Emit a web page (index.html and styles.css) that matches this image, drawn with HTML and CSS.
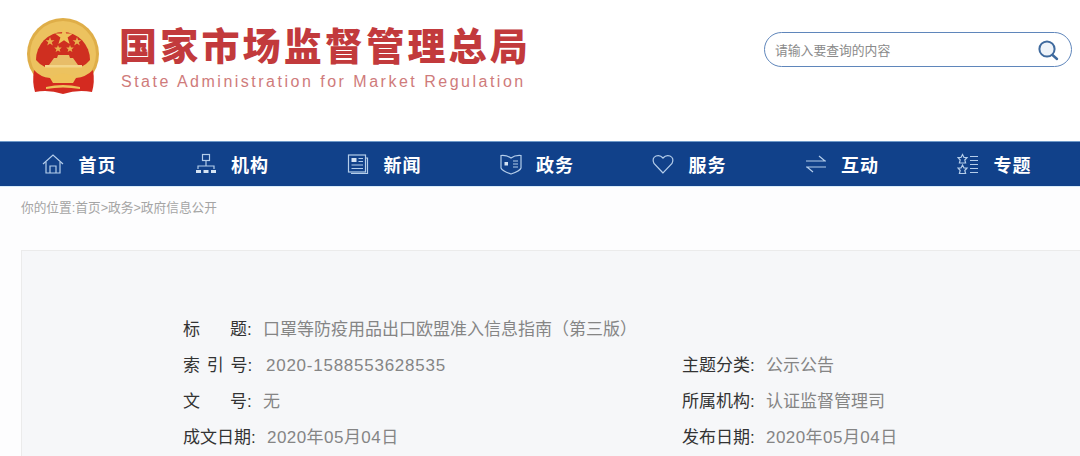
FILE: index.html
```html
<!DOCTYPE html>
<html lang="zh-CN">
<head>
    <meta charset="UTF-8">
    <title>口罩等防疫用品出口欧盟准入信息指南（第三版）</title>
    <link rel="stylesheet" href="styles.css">
</head>
<body>
    <div class="header">
        <div class="logo">
            <svg class="emblem" width="76" height="78" viewBox="0 0 76 78">
                <circle cx="37" cy="36" r="36" fill="#dfae48"/>
                <circle cx="37" cy="36" r="33" fill="#ecc25f"/>
                <path d="M10 42 A27 28 0 1 1 64 42 Q60 47 55 49 L19 49 Q14 47 10 42 Z" fill="#cf2f20"/>
                <polygon points="38,9 40.2,15.5 47,15.5 41.6,19.6 43.6,26 38,22.2 32.4,26 34.4,19.6 29,15.5 35.8,15.5" fill="#f0c35a"/>
                <polygon points="24,19 25.2,22.2 28.4,22.2 25.8,24.2 26.8,27.4 24,25.5 21.2,27.4 22.2,24.2 19.6,22.2 22.8,22.2" fill="#e9b04e"/>
                <polygon points="51,19 52.2,22.2 55.4,22.2 52.8,24.2 53.8,27.4 51,25.5 48.2,27.4 49.2,24.2 46.6,22.2 49.8,22.2" fill="#e9b04e"/>
                <polygon points="32,27 33,29.6 35.8,29.6 33.6,31.4 34.4,34 32,32.4 29.6,34 30.4,31.4 28.2,29.6 31,29.6" fill="#e9b04e"/>
                <polygon points="44,27 45,29.6 47.8,29.6 45.6,31.4 46.4,34 44,32.4 41.6,34 42.4,31.4 40.2,29.6 43,29.6" fill="#e9b04e"/>
                <path d="M32 37 H43 L44 40 H47 L52 47 H23 L28 40 H31 Z" fill="#e8bd68"/>
                <rect x="19" y="47" width="37" height="2.5" fill="#f3d68a"/>
                <path d="M8 52 Q14 59 24 60 Q37 63 50 60 Q60 59 67 52 Q69 64 66 74 Q52 71 37 76 Q22 71 9 74 Q6 64 8 52 Z" fill="#d42a20"/>
                <path d="M24 60 Q37 51 50 60 L47 65 H27 Z" fill="#eec25b"/>
                <path d="M20 69 Q37 65 54 69 L54 71 Q37 68 20 71 Z" fill="#eec25b"/>
            </svg>
            <div class="logo-text">
                <div class="logo-title">国家市场监督管理总局</div>
                <div class="logo-sub">State Administration for Market Regulation</div>
            </div>
        </div>
        <div class="search">
            <span class="search-hint">请输入要查询的内容</span>
            <svg width="24" height="24" viewBox="0 0 24 24">
                <circle cx="11" cy="11" r="7.6" fill="#eef3f9" stroke="#3f6a9e" stroke-width="2"/>
                <path d="M16.5 17 L21 21" stroke="#3f6a9e" stroke-width="2.4" fill="none" stroke-linecap="round"/>
            </svg>
        </div>
    </div>

    <div class="nav">
        <a class="nav-item">
            <svg class="nav-icon" viewBox="0 0 22 22">
                <path d="M1 11 L11 2 L21 11"/>
                <path d="M4 9 V20 H18 V9"/>
                <path d="M8 20 V13 H14 V20"/>
            </svg>
            <span>首页</span>
        </a>
        <a class="nav-item">
            <svg class="nav-icon" viewBox="0 0 22 22">
                <rect x="7.5" y="1.5" width="7" height="6"/>
                <path d="M11 7.5 V13 M3 16 V13 H19 V16"/>
                <path class="fill" d="M1 17 H6 V20 H1 Z M8.5 17 H13.5 V20 H8.5 Z M16 17 H21 V20 H16 Z"/>
            </svg>
            <span>机构</span>
        </a>
        <a class="nav-item">
            <svg class="nav-icon" viewBox="0 0 22 22">
                <rect x="1.5" y="2" width="17" height="17"/>
                <path d="M18.5 5 H20.5 V20.5 H4"/>
                <rect class="fill" x="4.5" y="5" width="5" height="4"/>
                <path d="M11.5 5.5 H16 M11.5 8.5 H16 M4.5 12 H16 M4.5 15.5 H16"/>
            </svg>
            <span>新闻</span>
        </a>
        <a class="nav-item">
            <svg class="nav-icon" viewBox="0 0 22 22">
                <path d="M1 2.5 Q7 2 11 5 Q15 2 21 2.5 V15 Q20 18 11 21 Q2 18 1 15 Z"/>
                <path class="fill" d="M4.5 9 H8 V12.5 H4.5 Z"/>
                <path d="M13 8 H18 M13 11 H18 M13 14 H18"/>
            </svg>
            <span>政务</span>
        </a>
        <a class="nav-item">
            <svg class="nav-icon" viewBox="0 0 22 22">
                <path d="M11 20 L2 10.5 Q-0.5 5 4 3 Q8 1.5 11 5 Q14 1.5 18 3 Q22.5 5 20 10.5 Z"/>
            </svg>
            <span>服务</span>
        </a>
        <a class="nav-item">
            <svg class="nav-icon" viewBox="0 0 22 22">
                <path d="M1 8 H21 M14 3 L20 8"/>
                <path d="M1 14 H21 M2 14 L8 19"/>
            </svg>
            <span>互动</span>
        </a>
        <a class="nav-item">
            <svg class="nav-icon" viewBox="0 0 22 22">
                <path d="M5.5 1.5 L7 4.5 H10 L7.8 7 L8.6 10 H2.4 L3.2 7 L1 4.5 H4 Z"/>
                <path d="M5.5 12 L7 15 H10 L7.8 17.5 L8.6 20.5 H2.4 L3.2 17.5 L1 15 H4 Z"/>
                <path d="M13 3.5 H21 M13 7.5 H21 M13 11.5 H21 M13 15.5 H21 M13 19.5 H21"/>
            </svg>
            <span>专题</span>
        </a>
    </div>

    <div class="crumb">你的位置:首页&gt;政务&gt;政府信息公开</div>

    <div class="card">
        <div class="meta-row">
            <div class="meta-cell wide">
                <span class="meta-label short">标<i class="gap"></i>题:</span>
                <span class="meta-value">口罩等防疫用品出口欧盟准入信息指南（第三版）</span>
            </div>
        </div>
        <div class="meta-row">
            <div class="meta-cell">
                <span class="meta-label mid">索 引 号:</span>
                <span class="meta-value long">2020-1588553628535</span>
            </div>
            <div class="meta-cell">
                <span class="meta-label">主题分类:</span>
                <span class="meta-value">公示公告</span>
            </div>
        </div>
        <div class="meta-row">
            <div class="meta-cell">
                <span class="meta-label short">文<i class="gap"></i>号:</span>
                <span class="meta-value">无</span>
            </div>
            <div class="meta-cell">
                <span class="meta-label">所属机构:</span>
                <span class="meta-value">认证监督管理司</span>
            </div>
        </div>
        <div class="meta-row">
            <div class="meta-cell">
                <span class="meta-label">成文日期:</span>
                <span class="meta-value num">2020年05月04日</span>
            </div>
            <div class="meta-cell">
                <span class="meta-label">发布日期:</span>
                <span class="meta-value num">2020年05月04日</span>
            </div>
        </div>
    </div>
</body>
</html>
```

FILE: styles.css
```css
html, body {
    height: 456px;
    overflow: hidden;
}

body {
    margin: 0;
    font-family: "Liberation Sans", "Noto Sans CJK SC", sans-serif;
    background-color: #fdfdfe;
    color: #333;
}

.header {
    height: 141px;
    background-color: #fff;
    display: flex;
    justify-content: space-between;
    align-items: flex-start;
}

.logo {
    display: flex;
    align-items: flex-start;
    margin: 18px 0 0 26px;
}

.emblem {
    flex-shrink: 0;
}

.logo-text {
    margin: 4px 0 0 17px;
}

.logo-title {
    font-family: "Noto Sans CJK SC", sans-serif;
    font-size: 38px;
    line-height: 44px;
    font-weight: 900;
    letter-spacing: 3.2px;
    color: #c23a3c;
    white-space: nowrap;
}

.logo-sub {
    font-size: 16px;
    line-height: 18px;
    margin-top: 7px;
    margin-left: 2px;
    letter-spacing: 2.5px;
    color: #cf7b7b;
    white-space: nowrap;
}

.search {
    width: 285px;
    height: 33px;
    margin: 32px 8px 0 0;
    border: 1px solid #5f86bb;
    border-radius: 18px;
    background-color: #fff;
    display: flex;
    align-items: center;
    justify-content: space-between;
    padding: 0 11px 0 10px;
}

.search-hint {
    font-size: 12.8px;
    color: #8a8a8a;
}

.nav {
    height: 44px;
    background-color: #11418a;
    border-top: 1px solid #6f9ac9;
    border-bottom: 1px solid #d8ecfa;
    padding-left: 42px;
    display: grid;
    grid-template-columns: repeat(7, 152.5px);
    align-items: center;
}

.nav-item {
    display: flex;
    align-items: center;
    gap: 14.5px;
    color: #fff;
    font-size: 18px;
    font-weight: 700;
    letter-spacing: 0.9px;
}

.nav-icon {
    width: 22px;
    height: 22px;
    fill: none;
    stroke: #b4cdea;
    stroke-width: 1.2;
}

.nav-icon .fill {
    fill: #d5e3f3;
    stroke: none;
}

.crumb {
    height: 42px;
    line-height: 42px;
    padding-left: 21px;
    font-size: 12.7px;
    color: #a5a5a5;
}

.card {
    margin: 21px 0 0 21px;
    padding: 58px 0 3px 161px;
    background-color: #f6f7f9;
    border-top: 1px solid #ebebeb;
    border-left: 1px solid #ebebeb;
}

.meta-row {
    display: grid;
    grid-template-columns: 499px 1fr;
    height: 36px;
    align-items: center;
}

.meta-cell {
    display: flex;
    align-items: baseline;
    white-space: nowrap;
}

.meta-cell.wide {
    grid-column: 1 / 3;
}

.meta-label {
    width: 84px;
    font-size: 17px;
    color: #333;
}

.meta-label.short {
    width: 80px;
}

.meta-label.mid {
    width: 83px;
    word-spacing: 2px;
}

.gap {
    display: inline-block;
    width: 30px;
}

.meta-value {
    color: #858585;
    font-size: 17px;
}

.meta-value.num {
    letter-spacing: 0.45px;
}

.meta-value.long {
    letter-spacing: 0.75px;
}
```
